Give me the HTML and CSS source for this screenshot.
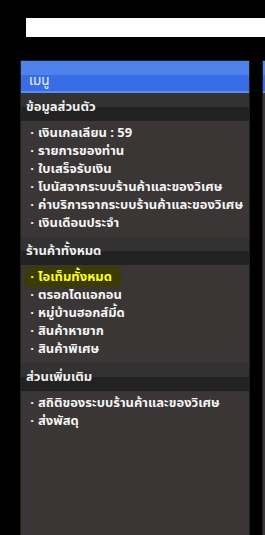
FILE: index.html
```html
<!DOCTYPE html>
<html lang="th">
<head>
<meta charset="utf-8">
<link rel="stylesheet" href="styles.css">
</head>
<body>
<div class="topbar"></div>
<div class="layout">
  <nav class="menu">
    <div class="menu-head">เมนู</div>
    <div class="sec-head">ข้อมูลส่วนตัว</div>
    <ul class="list">
      <li>เงินเกลเลียน : 59</li>
      <li>รายการของท่าน</li>
      <li>ใบเสร็จรับเงิน</li>
      <li>โบนัสจากระบบร้านค้าและของวิเศษ</li>
      <li>ค่าบริการจากระบบร้านค้าและของวิเศษ</li>
      <li>เงินเดือนประจำ</li>
    </ul>
    <div class="sec-head">ร้านค้าทั้งหมด</div>
    <ul class="list">
      <li><span class="active">ไอเท็มทั้งหมด</span></li>
      <li>ตรอกไดแอกอน</li>
      <li>หมู่บ้านฮอกส์มี้ด</li>
      <li>สินค้าหายาก</li>
      <li>สินค้าพิเศษ</li>
    </ul>
    <div class="sec-head">ส่วนเพิ่มเติม</div>
    <ul class="list">
      <li>สถิติของระบบร้านค้าและของวิเศษ</li>
      <li>ส่งพัสดุ</li>
    </ul>
  </nav>
  <div class="side">
    <div class="menu-head"></div>
  </div>
</div>
</body>
</html>
```
FILE: styles.css
```css
html, body {
  margin: 0;
  padding: 0;
  background: #000;
}
body {
  font-family: Tahoma, "Noto Sans Thai", "Noto Sans", "DejaVu Sans", sans-serif;
  font-size: 13px;
  font-weight: bold;
  color: #f4f4f4;
  height: 535px;
  overflow: hidden;
}
.topbar {
  margin: 18px 0 0 26px;
  height: 19px;
  background: #fff;
}
.layout {
  display: flex;
  gap: 12px;
  margin-top: 23px;
  padding-left: 20px;
}
.menu {
  width: 228px;
  flex: none;
  border: 1px solid #1f1f1f;
  border-bottom: none;
  background: #3a3636;
  min-height: 475px;
}
.side {
  flex: 1;
  border: 1px solid #1f1f1f;
  border-right: none;
  background: #3a3636;
  min-height: 475px;
}
.menu-head {
  height: 32px;
  box-sizing: border-box;
  padding: 5px 0 0 8px;
  line-height: 30px;
  font-size: 13.5px;
  font-weight: normal;
  color: #eef2ff;
  background: linear-gradient(#5080ea 0, #5080ea 14px, #386de6 14px, #386de6 30px, #5c8cf0 30px);
  overflow: hidden;
}
.sec-head {
  height: 28px;
  line-height: 28px;
  padding-left: 5px;
  color: #f0f0f0;
  background: linear-gradient(#333131 0, #333131 14px, #232222 14px);
}
.list {
  list-style: none;
  margin: 0;
  padding: 3px 0 5px 5px;
}
.list li {
  line-height: 18px;
  height: 18px;
  white-space: nowrap;
}
.list li::before,
.list li .active::before {
  content: "·";
  display: inline-block;
  width: 12px;
  text-align: center;
}
.list li:has(.active)::before {
  content: none;
}
.active {
  display: inline-block;
  padding-right: 8px;
  color: #ffff1e;
  background: #3c3b02;
  border-radius: 4px;
  box-shadow: 0 0 3px 1px #3c3b02;
}
```
